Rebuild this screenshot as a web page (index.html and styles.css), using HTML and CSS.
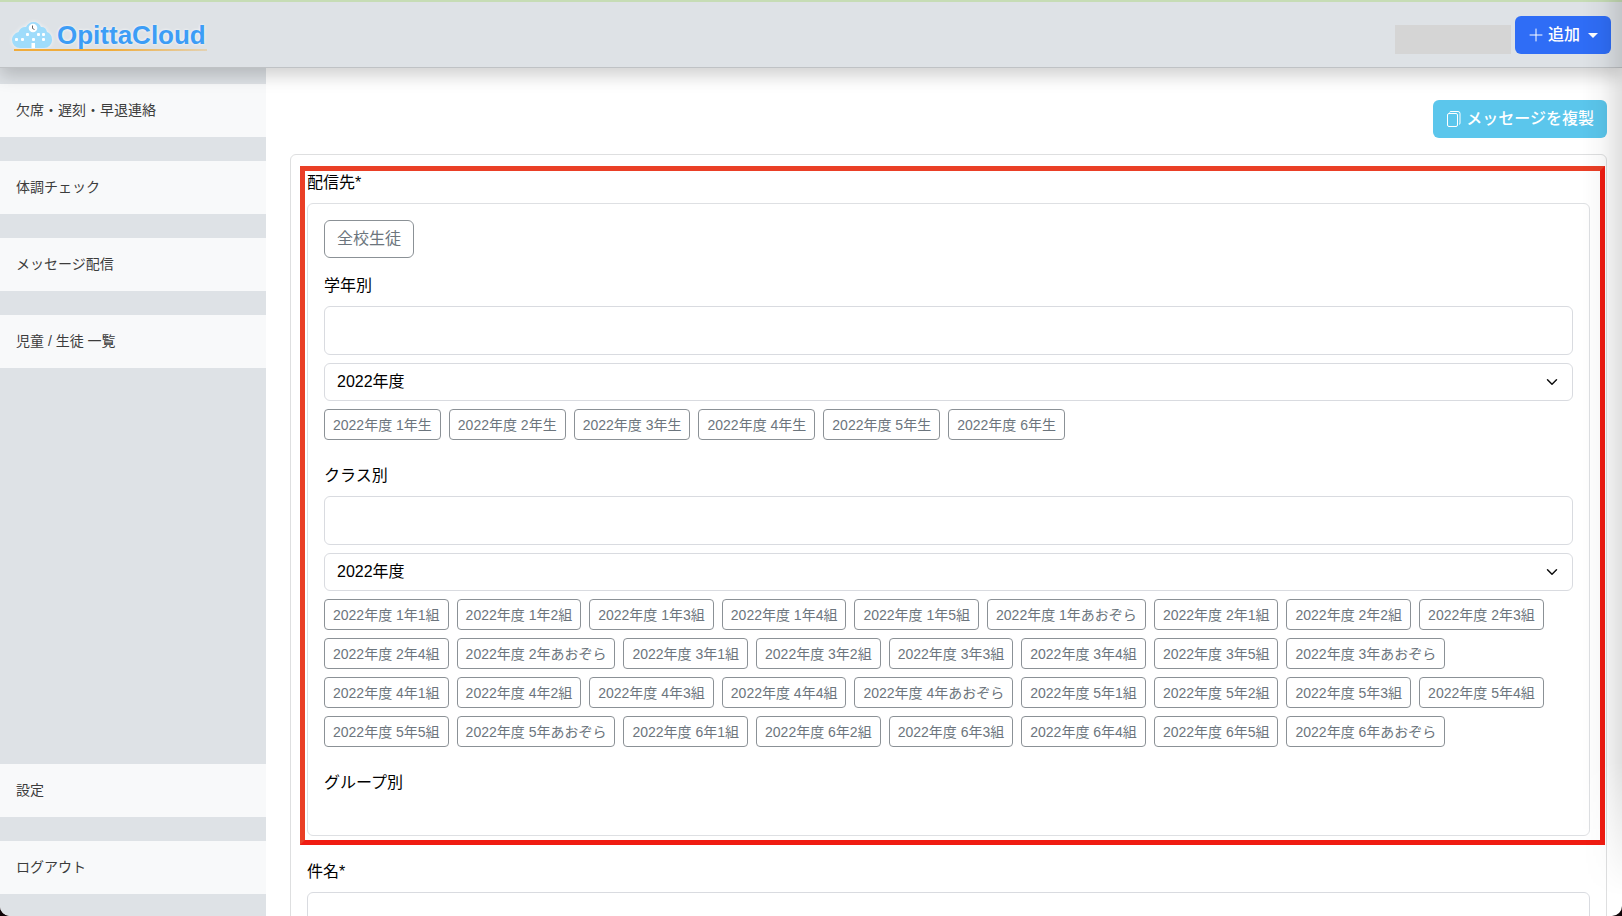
FILE: index.html
```html
<!DOCTYPE html>
<html lang="ja">
<head>
<meta charset="utf-8">
<title>OpittaCloud</title>
<link rel="stylesheet" href="styles.css">
</head>
<body>
<div class="app">
  <header class="header">
    <a class="brand" href="#">
      <svg class="brand-icon" width="40" height="28" viewBox="0 0 40 28" aria-hidden="true">
        <path fill="#9fdcfb" d="M8 27a8 8 0 0 1-8-8c0-4 3-7 6.500-8C8 7 11 5.500 14 6 15.500 3 18 1 21.500 1s6.500 2 7.500 5c3-.3 5.500 1.500 6 5 3 1 5 3.500 5 7.500a8 8 0 0 1-8 8.500z"/>
        <circle cx="21" cy="7" r="4.300" fill="#fff"/>
        <path d="M20.500 4.500v3l2 1" fill="none" stroke="#666" stroke-width="1"/>
        <g fill="#fff"><rect x="14" y="12" width="3" height="3" rx="1"/><rect x="25" y="12" width="3" height="3" rx="1"/><rect x="30" y="12" width="3" height="3" rx="1"/><rect x="3" y="17" width="3" height="3" rx="1"/><rect x="9" y="17" width="3" height="3" rx="1"/><rect x="20" y="17" width="3" height="3" rx="1"/><rect x="30" y="17" width="3" height="3" rx="1"/><rect x="19.500" y="22" width="3.500" height="5"/></g>
      </svg>
      <span class="brand-name">OpittaCloud</span>
    </a>
    <div class="header-actions">
      <span class="user-name"></span>
      <button class="btn btn-primary" type="button">
        <svg width="16" height="16" viewBox="0 0 16 16" aria-hidden="true"><path d="M8 2v12M2 8h12" stroke="currentColor" stroke-width="1" stroke-linecap="round"/></svg>
        <span>追加</span><span class="caret"></span>
      </button>
    </div>
  </header>
  <div class="body">
    <nav class="sidebar">
      <a href="#">欠席・遅刻・早退連絡</a>
      <a href="#">体調チェック</a>
      <a href="#">メッセージ配信</a>
      <a href="#">児童 / 生徒 一覧</a>
      <a class="push" href="#">設定</a>
      <a href="#">ログアウト</a>
    </nav>
    <main class="main">
      <button class="btn btn-info" type="button">
        <svg width="16" height="16" viewBox="0 0 16 16" fill="none" stroke="currentColor" aria-hidden="true"><rect x="1.500" y="2.500" width="10" height="13" rx="1.500"/><path d="M3.500 1.500A1.500 1.500 0 0 1 5 .5h7a2 2 0 0 1 2 2v9.500a1.500 1.500 0 0 1-1 1.500"/></svg>
        <span>メッセージを複製</span>
      </button>
      <form class="card">
        <section class="field marked">
          <h2 class="label">配信先*</h2>
          <div class="panel">
            <button class="btn btn-outline" type="button">全校生徒</button>
            <div class="group">
              <label class="label" for="grade">学年別</label>
              <input class="control selection" id="grade" type="text">
              <select class="control year" aria-label="学年別の年度"><option>2022年度</option></select>
              <div class="chips">
                <button type="button">2022年度 1年生</button>
                <button type="button">2022年度 2年生</button>
                <button type="button">2022年度 3年生</button>
                <button type="button">2022年度 4年生</button>
                <button type="button">2022年度 5年生</button>
                <button type="button">2022年度 6年生</button>
              </div>
            </div>
            <div class="group">
              <label class="label" for="class">クラス別</label>
              <input class="control selection" id="class" type="text">
              <select class="control year" aria-label="クラス別の年度"><option>2022年度</option></select>
              <div class="chips">
                <button type="button">2022年度 1年1組</button>
                <button type="button">2022年度 1年2組</button>
                <button type="button">2022年度 1年3組</button>
                <button type="button">2022年度 1年4組</button>
                <button type="button">2022年度 1年5組</button>
                <button type="button">2022年度 1年あおぞら</button>
                <button type="button">2022年度 2年1組</button>
                <button type="button">2022年度 2年2組</button>
                <button type="button">2022年度 2年3組</button>
                <button type="button">2022年度 2年4組</button>
                <button type="button">2022年度 2年あおぞら</button>
                <button type="button">2022年度 3年1組</button>
                <button type="button">2022年度 3年2組</button>
                <button type="button">2022年度 3年3組</button>
                <button type="button">2022年度 3年4組</button>
                <button type="button">2022年度 3年5組</button>
                <button type="button">2022年度 3年あおぞら</button>
                <button type="button">2022年度 4年1組</button>
                <button type="button">2022年度 4年2組</button>
                <button type="button">2022年度 4年3組</button>
                <button type="button">2022年度 4年4組</button>
                <button type="button">2022年度 4年あおぞら</button>
                <button type="button">2022年度 5年1組</button>
                <button type="button">2022年度 5年2組</button>
                <button type="button">2022年度 5年3組</button>
                <button type="button">2022年度 5年4組</button>
                <button type="button">2022年度 5年5組</button>
                <button type="button">2022年度 5年あおぞら</button>
                <button type="button">2022年度 6年1組</button>
                <button type="button">2022年度 6年2組</button>
                <button type="button">2022年度 6年3組</button>
                <button type="button">2022年度 6年4組</button>
                <button type="button">2022年度 6年5組</button>
                <button type="button">2022年度 6年あおぞら</button>
              </div>
            </div>
            <div class="group">
              <h3 class="label">グループ別</h3>
              <div class="chips"></div>
            </div>
          </div>
        </section>
        <section class="field">
          <label class="label" for="subject">件名*</label>
          <input class="control" id="subject" type="text">
        </section>
      </form>
    </main>
  </div>
</div>
</body>
</html>
```
FILE: styles.css
```css
* { box-sizing: border-box; }

body {
  margin: 0;
  background: #100508;
  color: #000;
  font-family: "Liberation Sans", "Noto Sans CJK JP", sans-serif;
  font-size: 16px;
  line-height: 24px;
}

.app {
  position: relative;
  display: flex;
  flex-direction: column;
  height: 100vh;
  overflow: hidden;
  background: #fff;
  border-radius: 0 0 10px 10px;
}

/* shade along the right window edge */
.app::after {
  content: "";
  position: absolute;
  z-index: 3;
  inset: 0 0 20px auto;
  width: 40px;
  background: linear-gradient(to right, transparent, rgba(0, 0, 0, .03) 50%, rgba(0, 0, 0, .12));
  mask-image: linear-gradient(#000 85%, transparent);
  pointer-events: none;
}

.header {
  position: relative;
  z-index: 2;
  flex: none;
  display: flex;
  align-items: center;
  justify-content: space-between;
  height: 68px;
  padding: 1px 11px 0 12px;
  background: #dee2e6;
  border-top: 2px solid #c6dcb5;
  border-bottom: 1px solid #bfc2c5;
  box-shadow: 0 8px 16px rgba(0, 0, 0, .18);
}

.brand {
  position: relative;
  display: flex;
  align-items: center;
  gap: 5px;
  padding-right: 1px;
  color: #3d9df6;
  text-decoration: none;
}
.brand::after {
  content: "";
  position: absolute;
  left: 2px;
  right: 0;
  bottom: 0;
  height: 2px;
  background: linear-gradient(to right, #f0ac3c 50%, rgba(240, 172, 60, .3));
}
.brand-icon { filter: drop-shadow(0 0 2px rgba(255, 255, 255, .7)); }
.brand-name {
  font-size: 26px;
  font-weight: 700;
  line-height: 32px;
  text-shadow: 0 0 3px #fff;
}

.header-actions { display: flex; align-items: center; gap: 4px; }
.user-name { width: 116px; height: 29px; margin-top: 8px; background: #d5d5d5; }

.btn {
  display: inline-flex;
  flex: none;
  align-items: center;
  height: 38px;
  padding: 0 12px;
  border: 1px solid transparent;
  border-radius: 6px;
  font: inherit;
}
.btn-primary { gap: 4px; background: #2f6df6; color: #fff; font-weight: 500; }
.caret {
  margin-left: 4px;
  border: 5px solid transparent;
  border-top-color: currentColor;
  border-bottom: 0;
}
.btn-info { align-self: flex-end; gap: 4px; margin-bottom: 16px; background: #5bc6ec; color: #fff; font-weight: 500; }
.btn-outline { background: #fff; border-color: #8b9196; color: #6c757d; }

.body { flex: 1; display: flex; min-height: 0; }

.sidebar {
  flex: none;
  display: flex;
  flex-direction: column;
  gap: 24px;
  width: 266px;
  padding: 16px 0 22px;
  background: #dee2e6;
}
.sidebar a {
  padding: 16px;
  background: #f8f9fa;
  color: #3c3c3c;
  font-size: 14px;
  line-height: 21px;
  text-decoration: none;
}
.sidebar .push { margin-top: auto; }

.main {
  flex: 1;
  display: flex;
  flex-direction: column;
  min-width: 0;
  padding: 32px 15px 0 24px;
  overflow: hidden;
}

.card {
  flex: none;
  padding: 16px;
  border: 1px solid #dedfe0;
  border-radius: 6px;
}
.field { margin-bottom: 24px; }
.label { display: block; margin: 0 0 8px; font-size: 16px; font-weight: 400; line-height: 24px; }
.marked { position: relative; }
.marked::after {
  content: "";
  position: absolute;
  inset: -5px -15px -9px -7px;
  border: 5px solid #ea3f26;
  border-right-color: #f01c12;
  border-bottom-color: #f01c12;
  pointer-events: none;
}

.panel { padding: 16px; border: 1px solid #dee0e3; border-radius: 6px; }
.group { margin-top: 16px; }
.group + .group { margin-top: 24px; }

.control {
  display: block;
  width: 100%;
  height: 38px;
  padding: 0 12px;
  border: 1px solid #d9dbe0;
  border-radius: 6px;
  background: #fff;
  color: #000;
  font: inherit;
}
.selection { height: 49px; }
.year {
  margin: 8px 0;
  appearance: none;
  background: #fff url("data:image/svg+xml,%3Csvg xmlns='http://www.w3.org/2000/svg' viewBox='0 0 16 16'%3E%3Cpath fill='none' stroke='%23111' stroke-linecap='round' stroke-linejoin='round' stroke-width='2' d='m2 5 6 6 6-6'/%3E%3C/svg%3E") no-repeat right 14px center / 12px 12px;
}

.chips { display: flex; flex-wrap: wrap; gap: 8px; }
.chips:empty { height: 16px; }
.chips button {
  height: 31px;
  padding: 0 8px;
  border: 1px solid #8b9196;
  border-radius: 4px;
  background: #fff;
  color: #6c757d;
  font: inherit;
  font-size: 14px;
}
```
